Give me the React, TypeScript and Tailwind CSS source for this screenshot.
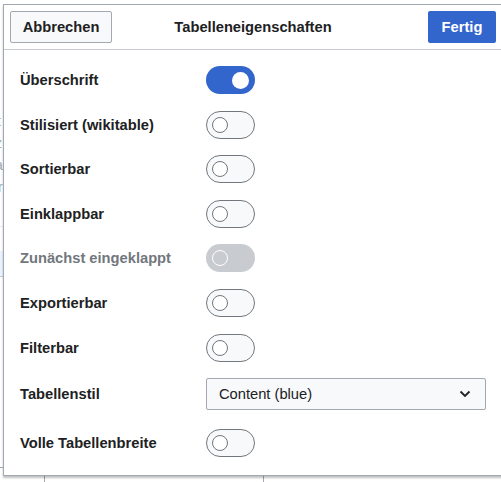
import React from 'react';

type Row = { label: string; on?: boolean; disabled?: boolean; select?: boolean };

const rows: Row[] = [
  { label: 'Überschrift', on: true },
  { label: 'Stilisiert (wikitable)' },
  { label: 'Sortierbar' },
  { label: 'Einklappbar' },
  { label: 'Zunächst eingeklappt', disabled: true },
  { label: 'Exportierbar' },
  { label: 'Filterbar' },
  { label: 'Tabellenstil', select: true },
  { label: 'Volle Tabellenbreite' },
];

const Toggle = ({ on, disabled }: { on?: boolean; disabled?: boolean }) => {
  if (on) {
    return (
      <div className="flex h-[28px] w-[49px] items-center justify-end rounded-full bg-[#3366cc] pr-[6px]">
        <div className="h-[17px] w-[17px] rounded-full bg-white" />
      </div>
    );
  }
  if (disabled) {
    return (
      <div className="flex h-[28px] w-[49px] items-center rounded-full bg-[#c8ccd1] pl-[6px]">
        <div className="h-[16px] w-[16px] rounded-full border border-white bg-[#c8ccd1]" />
      </div>
    );
  }
  return (
    <div className="flex h-[28px] w-[49px] items-center rounded-full border border-[#72777d] bg-[#f8f9fa] pl-[5px]">
      <div className="h-[16px] w-[16px] rounded-full border border-[#72777d] bg-white" />
    </div>
  );
};

const Select = () => (
  <div className="flex h-[32px] items-center justify-between rounded-[2px] border border-[#a2a9b1] bg-[#f8f9fa] pl-[12px] pr-[14px] text-[14.7px] text-[#202122]">
    <span>Content (blue)</span>
    <svg width="12" height="8" viewBox="0 0 12 8" fill="none">
      <path d="M1.5 1.5 6 6l4.5-4.5" stroke="#202122" strokeWidth="1.8" />
    </svg>
  </div>
);

export default function App() {
  return (
    <div
      className="relative h-[482px] w-[501px] overflow-hidden bg-white"
      style={{ fontFamily: '"Liberation Sans", Arial, sans-serif' }}
    >
      {/* page behind the dialog */}
      <div className="absolute inset-0 text-[14px] text-[#a2a9b1]">
        <div className="flex flex-col pt-[110px] leading-[22px]">
          <span className="-ml-[3px]">t</span>
          <span className="-ml-[5px]">z</span>
          <span className="-ml-[5px]">a</span>
          <span className="-ml-[2px]">r</span>
        </div>
        <div className="mt-[28px] h-px w-full bg-[#eaecf0]" />
        <div className="mt-[24px] h-[26px] w-full border-b border-[#c8ccd1] bg-[#eaf3ff]" />
        <div className="mt-[190px] flex h-[60px] border-t border-[#a2a9b1]">
          <div className="w-[45px] border-r border-[#a2a9b1]" />
          <div className="w-[219px] border-r border-[#a2a9b1]" />
        </div>
      </div>

      {/* dialog */}
      <div className="absolute left-[3px] top-[4px] flex h-[472px] w-[500px] flex-col border border-[#a2a9b1] bg-white shadow-[0_2px_2px_rgba(0,0,0,0.25)]">
        <div className="grid h-[45px] shrink-0 grid-cols-[1fr_auto_1fr] items-center border-b border-[#c8ccd1] px-[6px]">
          <div>
            <button className="h-[32px] w-[102px] rounded-[2px] border border-[#a2a9b1] bg-[#f8f9fa] text-[14.7px] font-bold text-[#202122]">
              Abbrechen
            </button>
          </div>
          <div className="text-[14.7px] font-bold text-[#202122]">Tabelleneigenschaften</div>
          <div className="flex justify-end">
            <button className="h-[32px] w-[68px] rounded-[2px] bg-[#3366cc] text-[14.7px] font-bold text-white">
              Fertig
            </button>
          </div>
        </div>

        <div className="flex flex-col gap-[16.6px] pl-[16px] pr-[16px] pt-[16px]">
          {rows.map((r, i) => (
            <div
              key={r.label}
              className={`grid grid-cols-[186px_1fr] items-center ${i === rows.length - 1 ? 'mt-[2px]' : ''}`}
            >
              <span
                className={`text-[14.7px] font-bold ${r.disabled ? 'text-[#72777d]' : 'text-[#202122]'}`}
              >
                {r.label}
              </span>
              {r.select ? <Select /> : <Toggle on={r.on} disabled={r.disabled} />}
            </div>
          ))}
        </div>
      </div>
    </div>
  );
}
